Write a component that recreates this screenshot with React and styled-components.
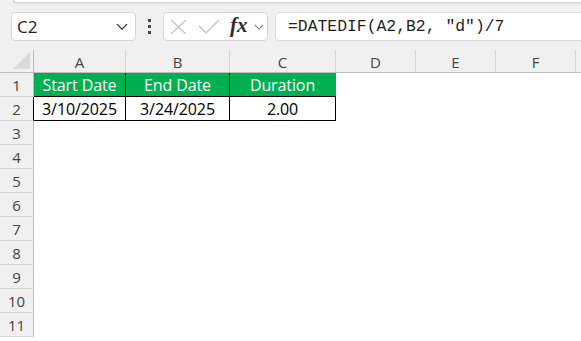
import React from "react";
import styled, { createGlobalStyle } from "styled-components";

const Global = createGlobalStyle`
  html, body { margin: 0; padding: 0; background: #f0f0f0; }
  body { font-family: "Open Sans", "Liberation Sans", sans-serif; }
`;

const Page = styled.div`
  width: 581px;
  height: 341px;
  overflow: hidden;
  background: #f0f0f0;
  display: flex;
  flex-direction: column;
`;

const RibbonEdge = styled.div`
  height: 2px;
  margin-left: 13px;
  background: #ffffff;
  border-left: 1px solid #d4d4d4;
  border-bottom: 1px solid #d4d4d4;
  border-bottom-left-radius: 5px;
  box-shadow: 0 1px 2px rgba(0, 0, 0, 0.08);
`;

const Toolbar = styled.div`
  display: flex;
  align-items: stretch;
  height: 29px;
  margin-top: 9px;
  padding-left: 11px;
`;

const Box = styled.div`
  box-sizing: border-box;
  background: #ffffff;
  border: 1px solid #d6d6d6;
  border-radius: 4px;
  display: flex;
  align-items: center;
`;

const NameBox = styled(Box)`
  width: 125px;
  padding: 0 7px 0 5px;
  justify-content: space-between;
  font-family: "Open Sans", "Liberation Sans", sans-serif;
  font-size: 17px;
  color: #1f1f1f;
`;

const Dots = styled.div`
  width: 27px;
  display: flex;
  flex-direction: column;
  align-items: center;
  justify-content: center;
  gap: 3px;
  span {
    width: 3px;
    height: 3px;
    background: #444;
  }
`;

const FxBox = styled(Box)`
  width: 105px;
  padding: 0 2px 0 6px;
`;

const FxText = styled.span`
  font-family: "Liberation Serif", "DejaVu Serif", serif;
  font-style: italic;
  font-weight: bold;
  font-size: 21px;
  color: #2b2b2b;
  margin-left: 10px;
  line-height: 1;
  margin-top: -2px;
`;

const FormulaInput = styled.div`
  box-sizing: border-box;
  flex: 1;
  margin-left: 7px;
  margin-right: -6px;
  background: #ffffff;
  border: 1px solid #dcdcdc;
  border-radius: 4px;
  display: flex;
  align-items: center;
  padding-left: 12px;
  font-family: "Liberation Mono", "DejaVu Sans Mono", monospace;
  font-size: 16.4px;
  color: #1f1f1f;
  white-space: nowrap;
`;

const Grid = styled.div`
  margin-top: 9px;
  display: grid;
  grid-template-columns: 34px 92px 104px 106px 80px 80px 80px 1fr;
  grid-auto-rows: 24px;
  grid-template-rows: 23px;
  background: #ffffff;
  flex: 1;
`;

const Corner = styled.div`
  background: #f0f0f0;
  border-right: 1px solid #bdbdbd;
  border-bottom: 1px solid #bdbdbd;
  position: relative;
  svg { position: absolute; right: 3px; bottom: 3px; }
`;

const ColHead = styled.div`
  box-sizing: border-box;
  background: #f0f0f0;
  border-right: 1px solid ${(p) => (p.$last ? "transparent" : "#d6d6d6")};
  border-bottom: 1px solid #bdbdbd;
  display: flex;
  align-items: center;
  justify-content: center;
  font-family: "Open Sans", "Liberation Sans", sans-serif;
  font-size: 15px;
  color: #444;
  padding-top: 1px;
`;

const RowHead = styled.div`
  box-sizing: border-box;
  background: #f0f0f0;
  border-right: 1px solid ${(p) => (p.$dark ? "#000" : "#bdbdbd")};
  border-bottom: 1px solid #d6d6d6;
  display: flex;
  align-items: center;
  justify-content: center;
  font-family: "Open Sans", "Liberation Sans", sans-serif;
  font-size: 15px;
  color: #444;
`;

const Cell = styled.div`
  box-sizing: border-box;
  display: flex;
  align-items: center;
  justify-content: center;
  background: ${(p) => (p.$head ? "#00b050" : "#ffffff")};
  color: ${(p) => (p.$head ? "#ffffff" : "#000000")};
  border-right: 1px solid ${(p) => (p.$right ? "#000" : "transparent")};
  border-bottom: 1px solid ${(p) => (p.$bottom ? "#000" : "transparent")};
  font-family: "Open Sans", "Liberation Sans", sans-serif;
  font-size: 16px;
  letter-spacing: -0.1px;
  white-space: nowrap;
`;

const Chevron = ({ size = 12, color = "#444" }) => (
  <svg width={size} height={size * 0.6} viewBox="0 0 12 7" fill="none">
    <path d="M1 1 L6 6 L11 1" stroke={color} strokeWidth="1.3" />
  </svg>
);

const cols = ["A", "B", "C", "D", "E", "F"];

export default function App() {
  const table = [
    ["Start Date", "End Date", "Duration"],
    ["3/10/2025", "3/24/2025", "2.00"],
  ];
  const rows = Array.from({ length: 11 }, (_, i) => i + 1);
  return (
    <Page>
      <Global />
      <RibbonEdge />
      <Toolbar>
        <NameBox>
          <span>C2</span>
          <Chevron size={12} color="#333" />
        </NameBox>
        <Dots>
          <span />
          <span />
          <span />
        </Dots>
        <FxBox>
          <svg width="17" height="16" viewBox="0 0 17 16">
            <path d="M1 1 L16 15 M16 1 L1 15" stroke="#c4c4c4" strokeWidth="1.4" />
          </svg>
          <svg width="22" height="15" viewBox="0 0 22 15" style={{ marginLeft: 11 }}>
            <path d="M1 7 L8 14 L21 1" stroke="#c4c4c4" strokeWidth="1.4" fill="none" />
          </svg>
          <FxText>fx</FxText>
          <span style={{ marginLeft: 6, display: "flex" }}>
            <Chevron size={10} color="#777" />
          </span>
        </FxBox>
        <FormulaInput>=DATEDIF(A2,B2, "d")/7</FormulaInput>
      </Toolbar>
      <Grid>
        <Corner>
          <svg width="17" height="17" viewBox="0 0 17 17">
            <polygon points="17,0 17,17 0,17" fill="#dadada" />
          </svg>
        </Corner>
        {cols.map((c) => (
          <ColHead key={c}>{c}</ColHead>
        ))}
        <ColHead $last />
        {rows.map((r) => (
          <React.Fragment key={r}>
            <RowHead $dark={r === 2}>{r}</RowHead>
            {cols.map((c, ci) => {
              const inTable = r <= 2 && ci < 3;
              const val = inTable ? table[r - 1][ci] : "";
              return (
                <Cell
                  key={c}
                  $head={r === 1 && ci < 3}
                  $right={inTable && (ci < 2 || r === 2)}
                  $bottom={inTable}
                >
                  {val}
                </Cell>
              );
            })}
            <Cell />
          </React.Fragment>
        ))}
      </Grid>
    </Page>
  );
}
